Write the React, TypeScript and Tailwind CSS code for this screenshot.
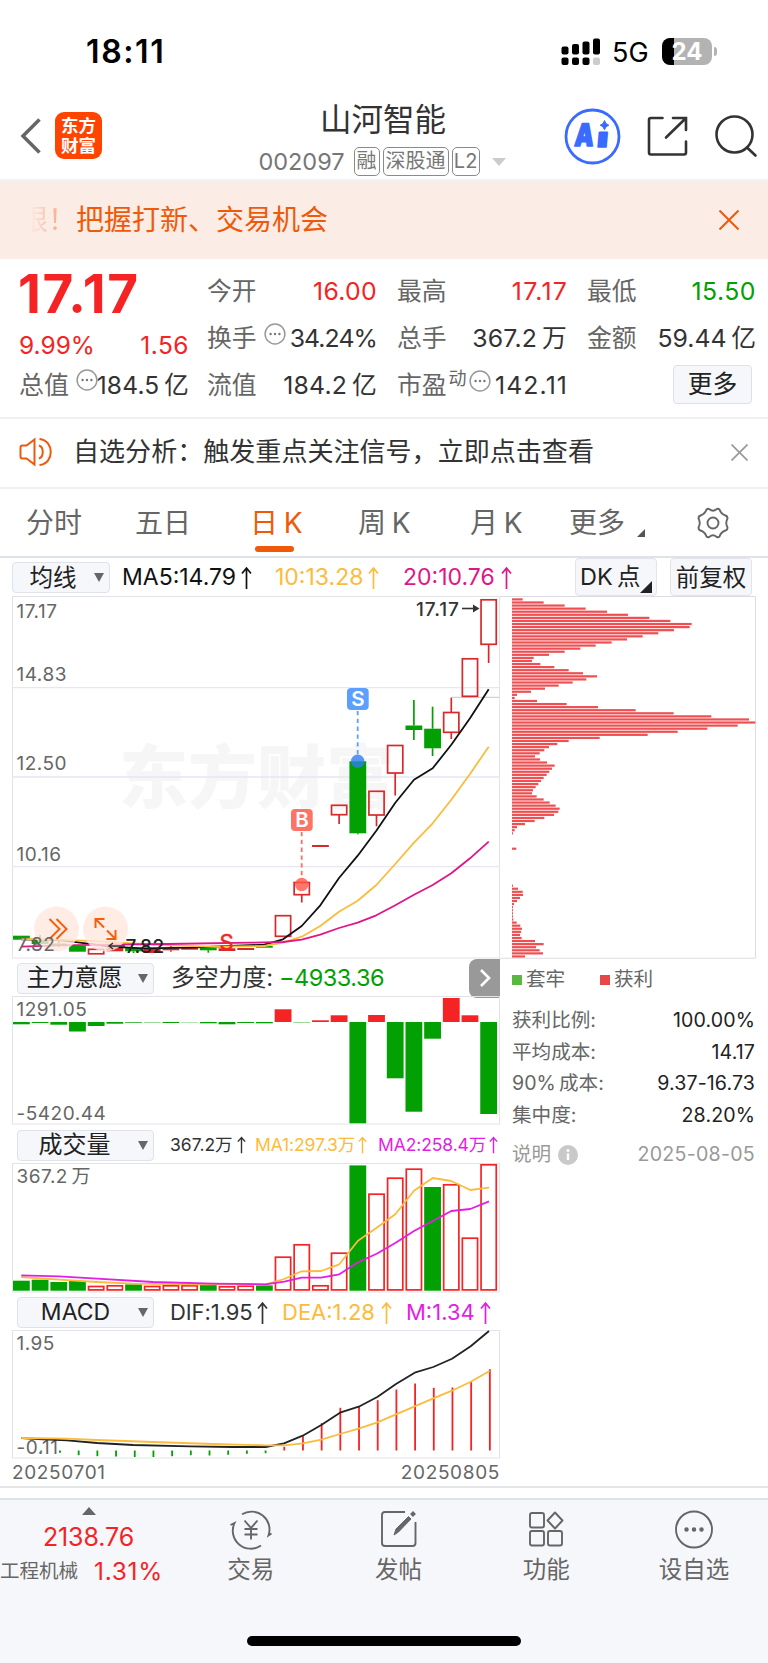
import type { ReactNode } from 'react';

type Dir = 'up' | 'down';

interface Candle {
  dir: Dir;
  top: number;
  bottom: number;
  high?: number;
  low?: number;
  solid?: boolean;
}

const RED = '#d9282b';
const GREEN = '#02a002';
const STEP = 18.69;
const cx = (i: number) => 21.4 + i * STEP;

const CANDLES: Candle[] = [
  { dir: 'down', top: 935.7, bottom: 939.7 },
  { dir: 'down', top: 940, bottom: 944, high: 935, low: 946 },
  { dir: 'down', top: 943.5, bottom: 945.5, high: 939, low: 947 },
  { dir: 'down', top: 946, bottom: 951.7 },
  { dir: 'up', top: 949.3, bottom: 953.8 },
  { dir: 'up', top: 947.7, bottom: 951.3, solid: true },
  { dir: 'down', top: 947.7, bottom: 951.3, low: 953 },
  { dir: 'up', top: 948.5, bottom: 953, solid: true },
  { dir: 'up', top: 948.3, bottom: 950.3, high: 946, low: 951.7, solid: true },
  { dir: 'up', top: 947.5, bottom: 949.7, solid: true },
  { dir: 'down', top: 948, bottom: 950.3, low: 952.7 },
  { dir: 'up', top: 948.3, bottom: 951, solid: true },
  { dir: 'up', top: 948, bottom: 950, solid: true },
  { dir: 'down', top: 946, bottom: 947.7 },
  { dir: 'up', top: 915.7, bottom: 936.3 },
  { dir: 'up', top: 882.5, bottom: 894.7, low: 902.5 },
  { dir: 'up', top: 845, bottom: 847, solid: true },
  { dir: 'up', top: 805.3, bottom: 814.7, low: 824 },
  { dir: 'down', top: 761.3, bottom: 833.3, low: 834.3 },
  { dir: 'up', top: 791.3, bottom: 815, low: 826.3 },
  { dir: 'up', top: 745.5, bottom: 773, low: 795.5 },
  { dir: 'down', top: 725.5, bottom: 730, high: 700, low: 740 },
  { dir: 'down', top: 728.7, bottom: 748.3, high: 706.7, low: 756 },
  { dir: 'up', top: 712.5, bottom: 732.3, high: 697.7, low: 739 },
  { dir: 'up', top: 658.8, bottom: 696.3 },
  { dir: 'up', top: 599.8, bottom: 644.3, low: 663 },
];

// distance from the zero line, positive = up
const FORCE = [-2.3, -1, -2.7, -9.5, -4, -1.7, -0.7, -0.4, -1, -0.3, -1.3, -2.3, -1, -1.3, 12.7, -0.4, 1.7, 6.7, -101.3, 7, -56.3, -89.7, -16.7, 24, 6.7, -92];

const VOLUME: [number, Dir][] = [
  [10, 'down'], [11, 'down'], [8.7, 'down'], [9.7, 'down'], [5, 'up'], [5.7, 'up'], [6.3, 'down'], [5, 'up'], [5.7, 'up'],
  [5.7, 'up'], [6, 'down'], [4.7, 'up'], [5.3, 'up'], [5.3, 'down'], [34.3, 'up'], [46.7, 'up'], [5.7, 'up'], [38.3, 'up'],
  [125.3, 'down'], [97.3, 'up'], [113.3, 'up'], [122.3, 'up'], [103.7, 'down'], [106.7, 'up'], [53.3, 'up'], [126.7, 'up'],
];

const MACD = [0, -1.3, -2.3, -4.7, -5.7, -6, -6.5, -6.5, -5.7, -4.7, -5, -4.3, -3.3, -2.7, 3.7, 14.3, 27.3, 42.7, 44.3, 50.3, 61, 67, 62.7, 63, 68.7, 81.3];

const CHIPS = [
  32, 95, 158, 221, 285, 348, 412, 475, 539, 533, 486, 439, 392, 345, 299, 251, 205, 158, 111, 65, 60, 85, 127, 170, 213, 255,
  223, 182, 140, 99, 57, 15, 8, 75, 164, 258, 371, 485, 598, 711, 730, 677, 586, 497, 407, 263, 170, 136, 111, 97, 83, 69, 84,
  105, 128, 120, 112, 104, 95, 87, 79, 71, 63, 60, 74, 95, 113, 131, 143, 139, 126, 97, 68, 39, 15, 8, 3, 0, 0, 0, 0, 13, 0, 0,
  0, 0, 0, 0, 0, 0, 0, 0, 0, 3, 18, 32, 33, 24, 15, 6, 3, 3, 3, 3, 4, 14, 25, 30, 27, 24, 29, 69, 95, 72, 83, 93, 39,
];

const STATS = [
  ['获利比例:', '100.00%'],
  ['平均成本:', '14.17'],
  ['90% 成本:', '9.37-16.73'],
  ['集中度:', '28.20%'],
];

function Arrow({ small = false }: { small?: boolean }) {
  return (
    <svg width={small ? 9 : 11} height={small ? 18 : 24} viewBox="0 0 11 24" preserveAspectRatio="none" fill="none" stroke="currentColor" strokeWidth="1.7">
      <path d="M5.5 23V2M1 7.5L5.5 2L10 7.5" />
    </svg>
  );
}

function Dots({ className = '' }: { className?: string }) {
  return (
    <svg className={`shrink-0 ${className}`} width="22" height="22" viewBox="0 0 22 22">
      <circle cx="11" cy="11" r="9.9" fill="none" stroke="#999" strokeWidth="1.5" />
      <circle cx="6.6" cy="11" r="1.2" fill="#777" />
      <circle cx="11" cy="11" r="1.2" fill="#777" />
      <circle cx="15.4" cy="11" r="1.2" fill="#777" />
    </svg>
  );
}

function Cell({ label, value, extra, color = 'text-[#333] tracking-[0.2px]' }: { label: string; value: string; extra?: ReactNode; color?: string }) {
  return (
    <div className="flex h-[47px] items-center justify-between whitespace-nowrap">
      <span className="flex items-center text-[#666]">{label}{extra}</span>
      <span className={color}>{value}</span>
    </div>
  );
}

function Select({ label, className }: { label: string; className: string }) {
  return (
    <div className={`relative flex h-[31px] shrink-0 items-center justify-center rounded-[4px] border border-[#dfe2e8] bg-[#f6f7fa] text-[#222] ${className}`}>
      {label}
      <svg className="absolute right-[5px] top-[10px]" width="10" height="9" viewBox="0 0 10 9"><path d="M0 0H10L5 9Z" fill="#666" /></svg>
    </div>
  );
}

function Panel({ y, h, children }: { y: number; h: number; children: ReactNode }) {
  return (
    <svg className="block" width="500" height={h} viewBox={`0 ${y} 500 ${h}`}>
      <rect x="12.5" y={y + 0.5} width="487" height={h - 1.5} fill="none" stroke="#e2e3e9" />
      {children}
    </svg>
  );
}

function Label({ y, children }: { y: number; children: ReactNode }) {
  return <text x="16.5" y={y} fontSize="19" letterSpacing="0.5" fill="#666">{children}</text>;
}

function KLine() {
  return (
    <Panel y={596} h={363}>
      <text x="119" y="803" fontSize="69" fontWeight="900" fill="#f6f6f7">东方财富</text>
      {[687.7, 777, 866.7].map((y) => <path key={y} d={`M12.5 ${y}H499.5`} stroke="#e6e7ef" strokeWidth="1.3" />)}
      <path d="M451 697.3H499.5" stroke="#cfd2d9" strokeWidth="1.2" />
      {CANDLES.map((c, i) => {
        const color = c.dir === 'up' ? RED : GREEN;
        const hollow = c.dir === 'up' && !c.solid;
        return (
          <g key={i} stroke={color} strokeWidth="1.7">
            {c.high && <path d={`M${cx(i)} ${c.high}V${c.top}`} />}
            {c.low && <path d={`M${cx(i)} ${c.bottom}V${c.low}`} />}
            {hollow
              ? <rect x={cx(i) - 7.6} y={c.top} width="15.2" height={c.bottom - c.top} fill="none" />
              : <rect x={cx(i) - 8.4} y={c.top} width="16.8" height={c.bottom - c.top} fill={color} stroke="none" />}
          </g>
        );
      })}
      <g fill="none" strokeWidth="1.8" strokeLinejoin="round">
        <path stroke="#111" d="M21.3 939.3L59 940L80 942.7L110 946.7L143 948.3L190 947.7L230 946L264.3 944.7L283 939.3L301.7 926L320.3 905.3L339 878L357.7 855.7L376.3 830.7L395.3 802.7L414 779.7L432.7 768.3L451.3 744.7L470 718.3L488.7 689.3" />
        <path stroke="#fdbb3b" d="M21.3 939L59 939.7L100 941.3L133 943.3L167 945.3L213 946.7L264.3 946L283 942.7L301.7 936.7L320.3 926L339 911.7L357.7 900.7L376.3 885L395.3 864L414 842.7L432.7 823.3L451.3 799.7L470 774L488.7 746.7" />
        <path stroke="#e01588" d="M21.3 946.7L59 945.3L110 944.7L167 944L250 942.7L283 942L301.7 939.7L320.3 934.7L339 928L357.7 922.7L376.3 915.3L395.3 905.3L414 894.7L432.7 885L451.3 873.3L470 858.3L488.7 841.7" />
      </g>
      <circle cx="56.5" cy="929" r="22.5" fill="#ffe9de" opacity="0.8" />
      <circle cx="105.5" cy="929" r="22.5" fill="#ffe9de" opacity="0.8" />
      <g fill="none" stroke="#f0600f" strokeWidth="2">
        <path d="M49.5 919L59.5 929L49.5 939M56.5 919L66.5 929L56.5 939" />
        <path d="M95.5 928V919H104.5M95.5 919L104 927.5M115.5 930V939H106.5M115.5 939L107 930.5" />
      </g>
      <Label y={617.7}>17.17</Label>
      <Label y={680.7}>14.83</Label>
      <Label y={770.3}>12.50</Label>
      <Label y={861}>10.16</Label>
      <Label y={950.7}>7.82</Label>
      <path d="M125 946H109M113 943L109 946L113 949" stroke="#333" strokeWidth="1.5" fill="none" />
      <text x="125.5" y="952.7" fontSize="19" fontWeight="500" letterSpacing="0.4" fill="#222">7.82</text>
      <text x="219.5" y="949.5" fontSize="22" fill="#f32424" stroke="#f32424" strokeWidth="0.5">S</text>
      <text x="416" y="615.7" fontSize="19" fontWeight="500" letterSpacing="0.9" fill="#333">17.17</text>
      <path d="M462 608.5H474" stroke="#333" strokeWidth="1.6" />
      <path d="M473 604.5L479.5 608.5L473 612.5Z" fill="#333" />

      <path d="M357.7 711V756" stroke="#5ba0ff" strokeWidth="1.8" strokeDasharray="4.3 3.5" />
      <circle cx="357.7" cy="761.3" r="6.7" fill="#2f7df0" opacity="0.8" />
      <rect x="347" y="688" width="21.7" height="22" rx="4" fill="#5ba0ff" />
      <text x="357.8" y="706.3" fontSize="20.5" fontWeight="600" fill="#fff" textAnchor="middle">S</text>
      <path d="M301.7 832V877" stroke="#f87262" strokeWidth="1.8" strokeDasharray="4.3 3.5" />
      <circle cx="301.7" cy="884.5" r="6.7" fill="#ff5546" opacity="0.8" />
      <rect x="291" y="809" width="21.7" height="22" rx="4" fill="#fd7466" />
      <text x="302" y="827.3" fontSize="20.5" fontWeight="600" fill="#fff" textAnchor="middle">B</text>
    </Panel>
  );
}

function ChipChart() {
  return (
    <svg className="block" width="268" height="363" viewBox="0 0 268 363">
      <path d="M0 0.5H255.5V362.3H0" fill="none" stroke="#dcdde3" />
      {CHIPS.map((v, i) => v > 0 && (
        <rect key={i} x="12" y={2.3 + i * 3.078} width={v / 3} height="2.2" fill="#ee4f52" />
      ))}
    </svg>
  );
}

function Force() {
  return (
    <Panel y={996} h={129}>
      {FORCE.map((v, i) => (
        <rect key={i} x={cx(i) - 8.4} y={v > 0 ? 1022 - v : 1022} width="16.8" height={Math.abs(v)} fill={v > 0 ? '#f52323' : GREEN} />
      ))}
      <Label y={1016}>1291.05</Label>
      <Label y={1120}>-5420.44</Label>
    </Panel>
  );
}

function Volume() {
  return (
    <Panel y={1163} h={130}>
      {VOLUME.map(([v, dir], i) => dir === 'down'
        ? <rect key={i} x={cx(i) - 8.4} y={1290.7 - v} width="16.8" height={v} fill={GREEN} />
        : <rect key={i} x={cx(i) - 7.6} y={1291.5 - v} width="15.2" height={v - 1.6} fill="none" stroke="#f52323" strokeWidth="1.7" />)}
      <g fill="none" strokeWidth="1.8" strokeLinejoin="round">
        <path stroke="#fdbb3b" d="M21.3 1277L59 1279.7L97 1282L133 1283.7L190 1284.3L265.7 1284.3L284.3 1279L301.7 1271.3L321 1271L339.3 1264.3L358 1240.7L376.7 1227.7L395.3 1214.3L414 1190.7L432.7 1178L451.3 1181L470.3 1190L489 1187.7" />
        <path stroke="#e31ee3" d="M21.3 1275.3L59 1276.3L97 1278.7L153 1282L213 1283.7L265.7 1284.3L284.3 1281.7L301.7 1277.7L321 1277.7L339.3 1274.3L358 1262.3L376.7 1253.7L395.3 1243L414 1231L432.7 1221L451.3 1211L470.3 1209L489 1201.3" />
      </g>
      <Label y={1183}>367.2 万</Label>
    </Panel>
  );
}

function Macd() {
  return (
    <Panel y={1330} h={129}>
      {MACD.map((v, i) => (
        <rect key={i} x={cx(i) + 0.3} y={v > 0 ? 1450.5 - v : 1450.5} width="1.8" height={Math.abs(v)} fill={v > 0 ? '#f52323' : GREEN} />
      ))}
      <Label y={1350}>1.95</Label>
      <Label y={1453.5}>-0.11</Label>
      <g fill="none" strokeWidth="1.8" strokeLinejoin="round">
        <path stroke="#222" d="M21.3 1438L43 1439.3L67 1440.3L97 1443L133 1445L190 1446.3L233 1447L265.7 1447L284 1443.3L302.7 1435.7L321.3 1425L340 1412.7L358.7 1406.7L377.3 1397L396 1384L414.7 1372.7L433.3 1367L452 1358.7L470.7 1346.3L489 1331" />
        <path stroke="#fdbb3b" d="M21.3 1438L67 1438.7L97 1440L153 1442L213 1444L265.7 1445.3L284 1445.3L302.7 1443.3L321.3 1439.7L340 1434L358.7 1428.7L377.3 1422.3L396 1414.3L414.7 1406.3L433.3 1398.3L452 1390.7L470.7 1381.7L489.7 1371" />
      </g>
    </Panel>
  );
}

function NavItem({ label, children }: { label: string; children: ReactNode }) {
  return (
    <div className="flex w-[147.7px] flex-col items-center pt-[9px]">
      <svg width="44" height="42" viewBox="0 0 44 42" fill="none" stroke="#666" strokeWidth="1.9">{children}</svg>
      <span className="mt-[2px] text-[23.5px] leading-[34px] text-[#666]">{label}</span>
    </div>
  );
}

export default function App() {
  return (
    <div className="h-[1663px] w-[768px] overflow-hidden bg-white font-['Inter','Noto_Sans_CJK_SC',sans-serif] text-[#333] [word-spacing:-0.14em]">
      {/* Status bar */}
      <div className="flex h-[100px] items-center justify-between pl-[86px] pr-[51px] pt-[3px]">
        <span className="text-[32px] font-semibold tracking-[1.6px] text-black">18:11</span>
        <div className="flex items-center">
          <svg width="40" height="28" viewBox="0 0 40 28">
            <rect x="0.5" y="8.5" width="7" height="8" rx="2" />
            <rect x="11" y="6" width="7" height="10.5" rx="2" />
            <rect x="21.5" y="3.5" width="7" height="13" rx="2" />
            <rect x="32" y="0.5" width="7" height="16" rx="2" />
            <rect x="0.5" y="19.5" width="7" height="7.5" rx="2" />
            <rect x="11" y="19.5" width="7" height="7.5" rx="2" />
            <rect x="21.5" y="19.5" width="7" height="7.5" rx="2" />
            <rect x="32" y="19.5" width="7" height="7.5" rx="2" fill="#ccc" />
          </svg>
          <span className="ml-[11px] w-[50px] pt-[2px] text-[27px] leading-[30px] text-black">5G</span>
          <div className="flex h-[27px] w-[50px] items-center justify-center rounded-[8px] bg-[linear-gradient(to_right,#000_12px,#b3b3b3_12px)] text-[24px] font-bold text-white">24</div>
          <div className="ml-[2px] h-[9px] w-[3px] rounded-r-full bg-[#b3b3b3]" />
        </div>
      </div>

      {/* Header */}
      <div className="flex h-[81px] items-start border-b-2 border-[#f1f2f4]">
        <svg className="ml-[19px] mt-[17px]" width="24" height="38" viewBox="0 0 24 38" fill="none" stroke="#666" strokeWidth="3.5"><path d="M20.5 2.5L4 19L20.5 35.5" /></svg>
        <div className="ml-[12px] mt-[12px] flex h-[47px] w-[47px] flex-col items-center justify-center rounded-[9px] bg-[#ff4400] text-[17.5px] font-bold leading-[19.5px] text-white">
          <span>东方</span>
          <span>财富</span>
        </div>
        <div className="ml-[155px] flex w-[252px] flex-col items-center">
          <h1 className="text-[31.5px] leading-[40px]">山河智能</h1>
          <div className="-ml-[2px] mt-[7px] flex items-center text-[20px] leading-[27px] text-[#777]">
            <span className="mr-[9px] text-[23.5px]">002097</span>
            <span className="w-[26px] rounded-[5px] border-[1.5px] border-[#8a8a8a] text-center">融</span>
            <span className="ml-[3px] w-[66px] rounded-[5px] border-[1.5px] border-[#8a8a8a] text-center">深股通</span>
            <span className="ml-[3px] w-[28px] rounded-[5px] border-[1.5px] border-[#8a8a8a] text-center">L2</span>
            <svg className="ml-[12px]" width="14" height="8" viewBox="0 0 14 8"><path d="M0 0H14L7 8Z" fill="#ccc" /></svg>
          </div>
        </div>
        <svg className="ml-[55px] mt-[8px]" width="57" height="57" viewBox="0 0 57 57">
          <circle cx="28.5" cy="28.5" r="26.5" fill="none" stroke="#3a6bff" strokeWidth="2.8" />
          <g fill="#3a6bff" stroke="#3a6bff" strokeWidth="1.6" strokeLinejoin="round" fontWeight="900" transform="skewX(-5)">
            <text x="13.5" y="38.5" fontSize="31" textLength="19" lengthAdjust="spacingAndGlyphs">A</text>
            <text x="36" y="39.5" fontSize="27" textLength="11" lengthAdjust="spacingAndGlyphs">ı</text>
          </g>
          <path d="M40.500 12.500Q41.300 16.300 44.800 17.200Q41.300 18.100 40.500 21.900Q39.700 18.100 36.200 17.200Q39.700 16.300 40.500 12.500Z" fill="#3a6bff" stroke="#3a6bff" />
        </svg>
        <svg className="ml-[26px] mt-[15px]" width="42" height="42" viewBox="0 0 42 42" fill="none" stroke="#333" strokeWidth="2.6" strokeLinecap="round">
          <path d="M15.5 3H4Q2 3 2 5V37.500Q2 39.500 4 39.500H37Q39 39.500 39 37.500V26.500M26 3H39V15M38.500 3.500L19 22.500" />
        </svg>
        <svg className="ml-[26px] mt-[14px]" width="44" height="44" viewBox="0 0 44 44" fill="none" stroke="#333" strokeWidth="2.6" strokeLinecap="round">
          <circle cx="19.500" cy="20.500" r="18" />
          <path d="M32 33.500L40.500 41.500" />
        </svg>
      </div>

      {/* Banner */}
      <div className="flex h-[78px] items-center justify-between bg-[#fcece6] pl-[30px] pr-[29px] text-[28px] text-[#ee5a0a]">
        <div className="flex items-center whitespace-nowrap">
          <span className="flex w-[46px] justify-end overflow-hidden text-[28px] leading-[40px] opacity-60 [mask-image:linear-gradient(to_right,transparent,black_90%)]">限！</span>
          <span className="leading-[40px]">把握打新、交易机会</span>
        </div>
        <svg width="20" height="20" viewBox="0 0 20 20" stroke="#ee5a0a" strokeWidth="2"><path d="M0.5 0.5L19.5 19.5M19.5 0.5L0.5 19.5" /></svg>
      </div>

      {/* Quote */}
      <div className="flex h-[160px] border-b-2 border-[#eff0f2] pl-[19px] text-[25px]">
        <div className="w-[170px] whitespace-nowrap pt-[8px]">
          <div className="-ml-[1px] h-[55px] text-[53px] font-bold leading-[55px] tracking-[1.6px] text-[#f52323]">17.17</div>
          <div className="mt-[7px] flex h-[32px] items-center justify-between text-[24.5px] text-[#f52323]"><span>9.99%</span><span className="tracking-[0.5px]">1.56</span></div>
          <div className="flex h-[47px] items-center justify-between pt-[2px]">
            <span className="text-[#666]">总值</span>
            <Dots className="-mr-[6px] ml-[2px] -mt-[11px]" />
            <span className="text-[24.5px] tracking-[0.2px]">184.5 亿</span>
          </div>
        </div>
        <div className="ml-[18px] grid w-[549px] grid-cols-[170px_170px_169px] content-start gap-x-[20px] pt-[9px] text-[24.8px]">
          <Cell label="今开" value="16.00" color="tracking-[0.3px] text-[#f52323]" />
          <Cell label="最高" value="17.17" color="tracking-[1.2px] -mr-[1px] text-[#f52323]" />
          <Cell label="最低" value="15.50" color="tracking-[0.5px] text-[#02a002]" />
          <Cell label="换手" value="34.24%" color="tracking-[-0.9px]" extra={<Dots className="-mt-[10px] ml-[7px]" />} />
          <Cell label="总手" value="367.2 万" />
          <Cell label="金额" value="59.44 亿" color="text-[#333]" />
          <Cell label="流值" value="184.2 亿" />
          <Cell label="市盈" value="142.11" color="tracking-[1.1px] -mr-[1px]" extra={<><sup className="-mt-[14px] ml-[2px] text-[18px] leading-none top-0">动</sup><Dots className="-mt-[10px] ml-[2px]" /></>} />
          <div className="flex items-center justify-end pr-[4px]">
            <button className="-mt-[3px] h-[39px] w-[79px] rounded-[4px] border-[1.5px] border-[#dde0e5] bg-[#f6f7fa] text-[#222]">更多</button>
          </div>
        </div>
      </div>

      {/* Notice */}
      <div className="flex h-[70px] items-center border-b-2 border-[#eff0f2] pb-[2px] pl-[19px] pr-[20px]">
        <svg width="34" height="30" viewBox="0 0 34 30" fill="none" stroke="#ee5a0a" strokeWidth="2">
          <path d="M15.5 2.5V27.5L7.5 21.5H3.5Q1.5 21.5 1.5 19.5V10.5Q1.5 8.5 3.5 8.5H7.5ZM20 8.5C25 10 25 20 20 21.5M20.5 2C35.5 3.5 35.5 26.5 20.5 28" />
        </svg>
        <span className="ml-[20px] whitespace-nowrap text-[26.05px]">自选分析：触发重点关注信号，立即点击查看</span>
        <svg className="ml-auto" width="17" height="17" viewBox="0 0 17 17" stroke="#999" strokeWidth="1.7"><path d="M0.5 0.5L16.5 16.5M16.5 0.5L0.5 16.5" /></svg>
      </div>

      {/* Tabs */}
      <div className="flex h-[69px] items-center border-b-2 border-[#dfe2e7] text-[28px] text-[#666]">
        <span className="ml-[26px] w-[109px]">分时</span>
        <span className="w-[115px]">五日</span>
        <span className="relative w-[108px] text-[#ee5a0a]">
          日 K
          <span className="absolute -bottom-[8px] left-[5px] h-[6px] w-[39px] rounded-full bg-[#ee5a0a]" />
        </span>
        <span className="w-[112px]">周 K</span>
        <span className="w-[99px]">月 K</span>
        <span>更多</span>
        <svg className="ml-[12px] mt-[20px]" width="8" height="8" viewBox="0 0 8 8"><path d="M8 0V8H0Z" fill="#555" /></svg>
        <svg className="ml-[51px]" width="34" height="32" viewBox="0 0 34 32" fill="none" stroke="#666" strokeWidth="1.9" strokeLinejoin="round">
          <path d="M10.5 2.5Q12 1 13.5 2.3Q17 5 20.5 2.3Q22 1 23.5 2.5Q25 7 29.5 8.5Q31.5 9 31.5 11.5Q29 16 31.5 20.5Q31.5 23 29.5 23.5Q25 25 23.5 29.5Q22 31 20.5 29.7Q17 27 13.5 29.7Q12 31 10.5 29.5Q9 25 4.5 23.5Q2.5 23 2.5 20.5Q5 16 2.5 11.5Q2.5 9 4.5 8.5Q9 7 10.5 2.5Z" />
          <circle cx="17" cy="16" r="5.5" />
        </svg>
      </div>

      {/* Chart toolbar */}
      <div className="flex h-[38px] items-start whitespace-nowrap text-[23px]">
        <div className="flex h-[38px] w-[575px] items-center pl-[12px] pt-[1px]">
          <Select label="均线" className="w-[98px] pr-[16px] text-[23.5px]" />
          <span className="ml-[12px] flex w-[153px] items-center gap-[5px] text-[#111]">MA5:14.79<Arrow /></span>
          <span className="flex w-[128px] items-center gap-[5px] text-[#fdbb3b]">10:13.28<Arrow /></span>
          <span className="flex items-center gap-[6px] text-[#e01588]">20:10.76<Arrow /></span>
        </div>
        <div className="relative flex h-[38px] w-[82px] items-center rounded-[4px] border border-[#e2e4ea] bg-[#f6f7fa] pl-[4px] text-[23.5px] text-[#222]">
          DK 点
          <svg className="absolute bottom-[2px] right-[4px]" width="12" height="12" viewBox="0 0 12 12"><path d="M12 0V12H0Z" fill="#222" /></svg>
        </div>
        <div className="ml-[13px] flex h-[38px] w-[82px] items-center justify-center rounded-[4px] border border-[#e2e4ea] bg-[#f6f7fa] pt-[1px] text-[23.5px] text-[#222]">前复权</div>
      </div>

      {/* Charts */}
      <div className="flex h-[892px] border-b-2 border-[#e3e5e9]">
        <div className="w-[500px] whitespace-nowrap">
          <KLine />
          <div className="flex h-[37px] items-center pl-[17px] pt-[1px] text-[24px]">
            <Select label="主力意愿" className="w-[137px] pr-[22px]" />
            <span className="ml-[17px] text-[23.8px]">多空力度:</span>
            <span className="ml-[6px] text-[23.5px] tracking-[-0.5px] text-[#02a002]">−4933.36</span>
            <div className="ml-auto flex h-[39px] w-[31px] items-center justify-center rounded-l-[8px] bg-[#999]">
              <svg width="12" height="20" viewBox="0 0 12 20" fill="none" stroke="#fff" strokeWidth="2.6"><path d="M2 2L10 10L2 18" /></svg>
            </div>
          </div>
          <Force />
          <div className="flex h-[38px] items-center pl-[17px] pt-[2px] text-[17.5px]">
            <Select label="成交量" className="w-[137px] pr-[22px] text-[24px]" />
            <span className="ml-[16px] flex w-[85px] items-center gap-[4px]">367.2万<Arrow small /></span>
            <span className="flex w-[123px] items-center gap-[3px] tracking-[-0.1px] text-[#fdbb3b]">MA1:297.3万<Arrow small /></span>
            <span className="flex items-center gap-[3px] tracking-[-0.1px] text-[#e31ee3]">MA2:258.4万<Arrow small /></span>
          </div>
          <Volume />
          <div className="flex h-[37px] items-center pl-[17px] pt-[2px] text-[22px]">
            <Select label="MACD" className="w-[137px] pr-[20px] text-[23px]" />
            <span className="ml-[16px] flex w-[112px] items-center gap-[5px] tracking-[-0.1px]">DIF:1.95<Arrow /></span>
            <span className="flex w-[124px] items-center gap-[6px] text-[#fdbb3b]">DEA:1.28<Arrow /></span>
            <span className="flex items-center gap-[5px] text-[#e31ee3]">M:1.34<Arrow /></span>
          </div>
          <Macd />
          <div className="flex justify-between pl-[12px] text-[19px] leading-[27px] tracking-[0.65px] text-[#666]">
            <span>20250701</span>
            <span>20250805</span>
          </div>
        </div>

        <div className="w-[268px] text-[19.6px]">
          <ChipChart />
          <div className="flex h-[41px] items-center pl-[12px] text-[#666]">
            <span className="h-[10px] w-[10px] bg-[#5bb83e]" />
            <span className="ml-[4px] w-[74px]">套牢</span>
            <span className="h-[10px] w-[10px] bg-[#e8474a]" />
            <span className="ml-[4px]">获利</span>
          </div>
          <div className="ml-[12px] mt-[5px] w-[243px]">
            {STATS.map(([k, v]) => (
              <div key={k} className="flex h-[31.5px] items-center justify-between">
                <span className="text-[#666]">{k}</span>
                <span className="tracking-[0.1px] text-[#222]">{v}</span>
              </div>
            ))}
            <div className="mt-[8px] flex h-[31px] items-center text-[#999]">
              <span>说明</span>
              <svg className="ml-[7px]" width="20" height="20" viewBox="0 0 20 20">
                <circle cx="10" cy="10" r="10" fill="#c9c9c9" />
                <path d="M10 8.5V15" stroke="#fff" strokeWidth="2.4" />
                <circle cx="10" cy="5.5" r="1.5" fill="#fff" />
              </svg>
              <span className="ml-auto tracking-[0.25px]">2025-08-05</span>
            </div>
          </div>
        </div>
      </div>

      {/* Bottom nav */}
      <div className="mt-[10px] h-[165px] border-t-2 border-[#dfe2e6] bg-[#f6f7fa]">
        <div className="flex h-[136px] whitespace-nowrap">
          <div className="flex w-[177px] flex-col items-center pt-[7px] text-[#f52323]">
            <svg width="14" height="8" viewBox="0 0 14 8"><path d="M7 0L14 8H0Z" fill="#666" /></svg>
            <span className="mt-[5px] text-[25px] leading-[34px] tracking-[-0.1px]">2138.76</span>
            <div className="flex w-full items-center leading-[34px]">
              <span className="text-[19.5px] text-[#666]">工程机械</span>
              <span className="ml-[16px] text-[24.5px] tracking-[0.7px]">1.31%</span>
            </div>
          </div>
          <NavItem label="交易">
            <path d="M13 5.3A18 18 0 0 1 39.5 26.5L42.5 24.5M32 36.5A18 18 0 0 1 5.5 14L1.5 16" />
            <path d="M15.5 11.5L22 19L28.5 11.5M22 19V30.5M15.5 20H28.5M15.5 25.5H28.5" />
          </NavItem>
          <NavItem label="发帖">
            <path d="M28 3H8Q5 3 5 6V34Q5 37 8 37H35.5Q38.5 37 38.5 34V13" />
            <path d="M17 26L19 20L31.5 7.5L34 10L21.5 23Z" fill="#666" strokeWidth="1" />
            <path d="M34.5 6.5L37.5 3.5" strokeWidth="4" />
          </NavItem>
          <NavItem label="功能">
            <rect x="6" y="4" width="14" height="14.5" rx="2" />
            <rect x="6" y="22" width="14" height="14.5" rx="2" />
            <rect x="24" y="22" width="14" height="14.5" rx="2" />
            <path d="M31 3.5L38.5 11.5L31 19.5L23.5 11.5Z" strokeLinejoin="round" />
          </NavItem>
          <NavItem label="设自选">
            <circle cx="22" cy="20.5" r="18" />
            <circle cx="14.5" cy="20.5" r="1.3" fill="#666" />
            <circle cx="22" cy="20.5" r="1.3" fill="#666" />
            <circle cx="29.5" cy="20.5" r="1.3" fill="#666" />
          </NavItem>
        </div>
        <div className="mx-auto h-[10px] w-[274px] rounded-full bg-black" />
      </div>
    </div>
  );
}
